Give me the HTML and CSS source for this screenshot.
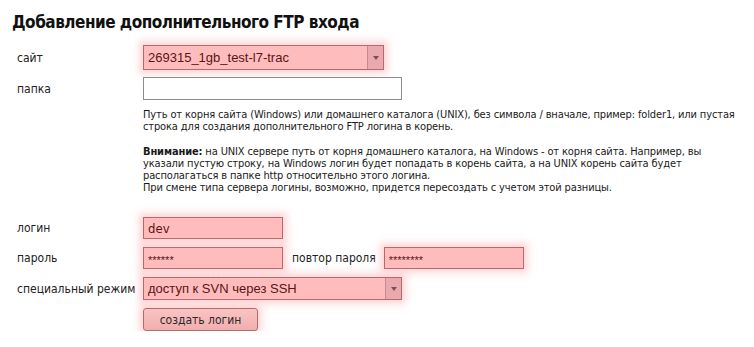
FILE: index.html
```html
<!DOCTYPE html>
<html lang="ru">
<head>
<meta charset="utf-8">
<title>Добавление дополнительного FTP входа</title>
<link rel="stylesheet" href="styles.css">
</head>
<body>
<div class="page">
  <h1 class="title">Добавление дополнительного FTP входа</h1>
  <form class="form">
    <div class="row row-site">
      <label class="label">сайт</label>
      <div class="select hl select-site">
        <span class="select-text">269315_1gb_test-l7-trac</span>
        <span class="select-arrow"><span class="tri"></span></span>
      </div>
    </div>
    <div class="row row-folder">
      <label class="label">папка</label>
      <div class="input plain input-folder"></div>
    </div>
    <div class="help">
      <p class="help-p">Путь от корня сайта (Windows) или домашнего каталога (UNIX), без символа / вначале, пример: folder1, или пустая<br>строка для создания дополнительного FTP логина в корень.</p>
      <p class="help-p"><b>Внимание:</b> на UNIX сервере путь от корня домашнего каталога, на Windows - от корня сайта. Например, вы<br>указали пустую строку, на Windows логин будет попадать в корень сайта, а на UNIX корень сайта будет<br>располагаться в папке http относительно этого логина.<br>При смене типа сервера логины, возможно, придется пересоздать с учетом этой разницы.</p>
    </div>
    <div class="row row-login">
      <label class="label">логин</label>
      <div class="input hl input-short"><span class="val">dev</span></div>
    </div>
    <div class="row row-pass">
      <label class="label">пароль</label>
      <div class="input hl input-short"><span class="stars">******</span></div>
      <label class="label-inline">повтор пароля</label>
      <div class="input hl input-short"><span class="stars">********</span></div>
    </div>
    <div class="row row-mode">
      <label class="label">специальный режим</label>
      <div class="select hl select-mode">
        <span class="select-text">доступ к SVN через SSH</span>
        <span class="select-arrow"><span class="tri"></span></span>
      </div>
    </div>
    <div class="row row-btn">
      <span class="label"></span>
      <button type="button" class="btn hl">создать логин</button>
    </div>
  </form>
</div>
</body>
</html>
```

FILE: styles.css
```css
html, body {
  margin: 0;
  padding: 0;
  background: #ffffff;
}
body {
  font-family: "DejaVu Sans Condensed", "DejaVu Sans", Verdana, sans-serif;
  font-stretch: semi-condensed;
  color: #222222;
}
.page {
  padding: 12px 0 0 12px;
}
.title {
  margin: 0;
  font-size: 17px;
  line-height: 20px;
  font-weight: bold;
  color: #111111;
  letter-spacing: -0.5px;
}
.form {
  margin: 0;
}
.row {
  display: flex;
  align-items: center;
}
.label {
  width: 126px;
  padding-left: 5px;
  flex: none;
  font-size: 12px;
  color: #222222;
  white-space: nowrap;
}
.row-site { margin-top: 13px; }
.row-folder { margin-top: 7px; }
.row-login { margin-top: 23px; }
.row-pass, .row-mode, .row-btn { margin-top: 8px; }

.hl {
  background: #ffbcbc;
  border: 1px solid #b56a6e;
  box-shadow: 0 0 7px 4px rgba(255, 180, 180, 0.55);
}
.select {
  box-sizing: border-box;
  display: flex;
  align-items: stretch;
  height: 25px;
}
.select-site { width: 241px; }
.select-mode { width: 259px; height: 23px; }
.select-text {
  flex: 1;
  display: flex;
  align-items: center;
  padding-left: 4px;
  font-family: "Liberation Sans", Arial, sans-serif;
  font-stretch: normal;
  font-size: 13px;
  color: #5a1416;
}
.select-arrow {
  width: 15px;
  border-left: 1px solid #c88a8f;
  background: #e9a9ae;
  display: flex;
  align-items: center;
  justify-content: center;
}
.tri {
  width: 0;
  height: 0;
  border-left: 3.5px solid transparent;
  border-right: 3.5px solid transparent;
  border-top: 4px solid #7d4e55;
}
.input {
  box-sizing: border-box;
  height: 22px;
  display: flex;
  align-items: center;
  padding-left: 4px;
}
.plain {
  background: #ffffff;
  border: 1px solid #8c8c8c;
}
.input-folder { width: 259px; height: 23px; }
.input-short { width: 140px; }
.val {
  font-size: 13px;
  color: #5a1416;
}
.stars {
  font-family: "Liberation Sans", Arial, sans-serif;
  font-stretch: normal;
  font-size: 11px;
  color: #5a1416;
  padding-top: 3px;
}
.label-inline {
  margin-left: 9px;
  margin-right: 8px;
  font-size: 12px;
  color: #222222;
  white-space: nowrap;
}
.help {
  margin-left: 131px;
  margin-top: 9px;
  font-size: 11px;
  line-height: 12px;
  letter-spacing: -0.13px;
  color: #1a1a1a;
  white-space: nowrap;
}
.help-p {
  margin: 0;
}
.help-p + .help-p {
  margin-top: 13px;
}
.btn {
  box-sizing: border-box;
  width: 115px;
  height: 23px;
  margin: 0;
  padding: 0;
  border-radius: 3px;
  font-family: "DejaVu Sans Condensed", "DejaVu Sans", Verdana, sans-serif;
  font-stretch: semi-condensed;
  font-size: 12px;
  color: #2a2a2a;
  background: linear-gradient(#f9c4c4, #f2aeae);
  cursor: pointer;
}
```
